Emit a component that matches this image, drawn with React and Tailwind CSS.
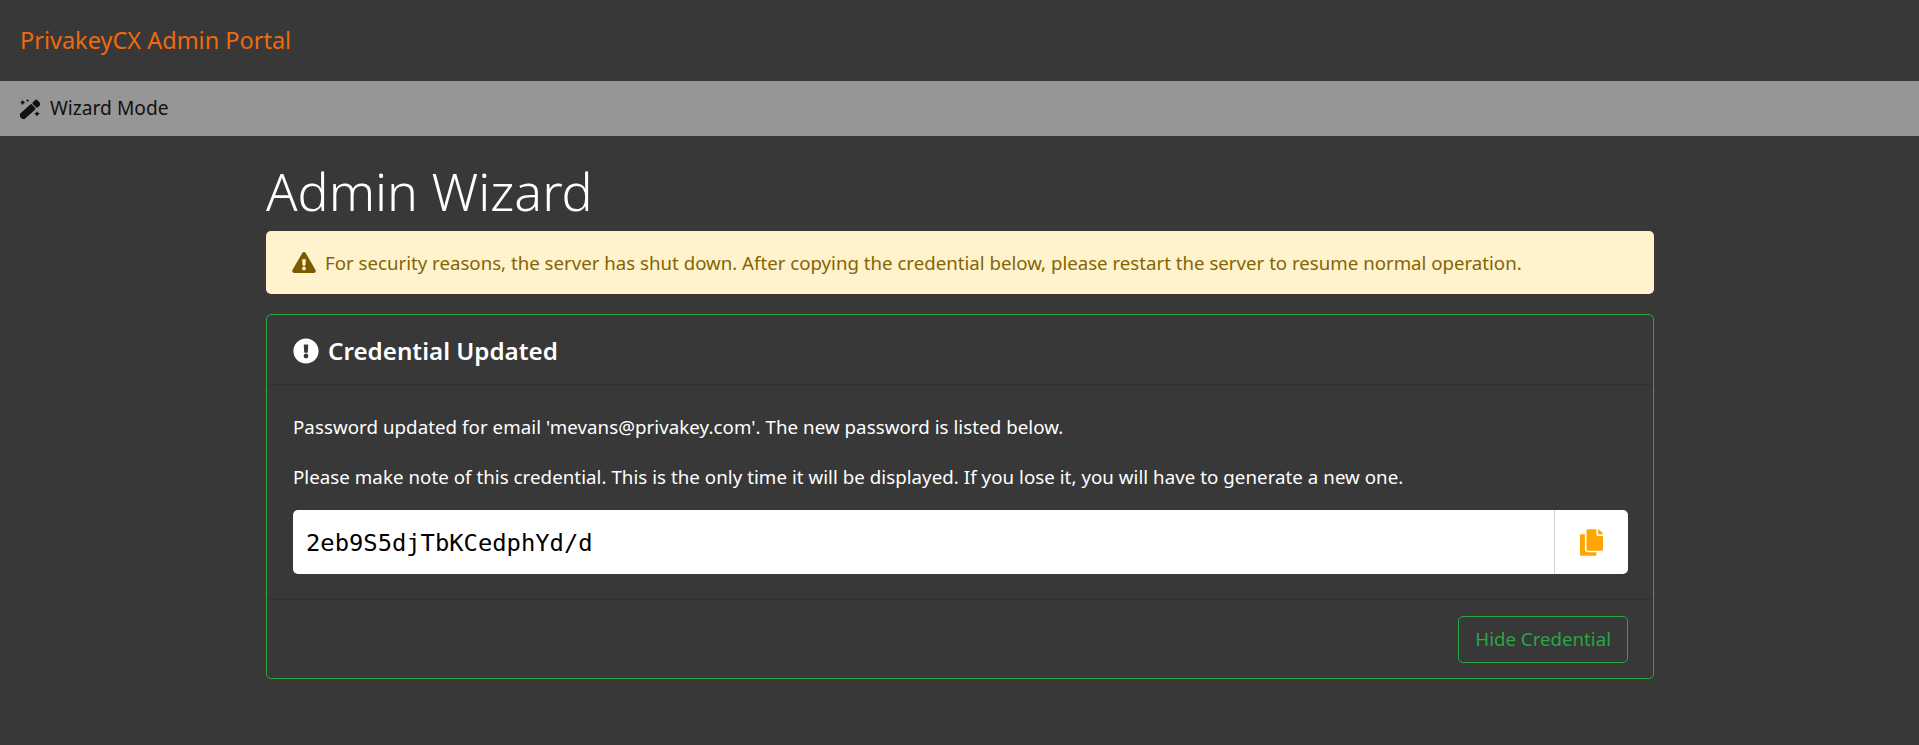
import React from 'react';
import { FaCopy, FaExclamationCircle, FaExclamationTriangle } from 'react-icons/fa';

const Sparkle = ({ x, y, r }) => (
  <path
    d={`M${x} ${y - r}Q${x + r * 0.25} ${y - r * 0.25} ${x + r} ${y}Q${x + r * 0.25} ${y + r * 0.25} ${x} ${y + r}Q${x - r * 0.25} ${y + r * 0.25} ${x - r} ${y}Q${x - r * 0.25} ${y - r * 0.25} ${x} ${y - r}Z`}
  />
);

// wand with a light band near the tip and three sparkles
const WandIcon = () => (
  <svg viewBox="0 0 20 20" className="w-5 h-5 text-[#111111]" fill="currentColor">
    <g transform="rotate(-42 10 10.5)">
      <rect x="-2.2" y="7" width="17" height="7" rx="1.2" />
      <rect x="15.8" y="7" width="6" height="7" rx="1.2" />
    </g>
    <Sparkle x={2.6} y={3.6} r={2.5} />
    <Sparkle x={7.6} y={1.6} r={1.6} />
    <Sparkle x={17} y={14.8} r={2.8} />
  </svg>
);

const App = () => {
  return (
    <div className="min-h-[745px] bg-[#383838] font-['Noto_Sans',sans-serif] text-white text-[18.7px]">
      {/* Top nav */}
      <nav className="h-[81px] flex items-center px-5">
        <span className="text-[23.5px] text-[#f0690f]">PrivakeyCX Admin Portal</span>
      </nav>

      {/* Mode bar */}
      <div className="h-[55px] flex items-center px-5 bg-[#969696] text-[#111111]">
        <WandIcon />
        <span className="ml-2.5 text-[19.2px]">Wizard Mode</span>
      </div>

      <main className="w-[1388px] ml-[266px]">
        <h1 className="mt-[26px] text-[51.9px] leading-[58px] font-light mb-[11px]">Admin Wizard</h1>

        {/* Alert */}
        <div className="h-[63px] flex items-center pl-[26px] pr-[27px] rounded-[5px] bg-[#fff3cd] text-[#856404]">
          <FaExclamationTriangle className="w-[24px] h-[21px] text-[#7a5c00]" />
          <span className="ml-[9px] text-[18.67px]">
            For security reasons, the server has shut down. After copying the credential below, please restart the server to resume normal operation.
          </span>
        </div>

        {/* Card */}
        <div className="mt-[20px] border border-[#28a745] rounded-[5px]">
          <div className="h-[70px] flex items-center pt-[3px] px-[26px] border-b border-[#303030]">
            <FaExclamationCircle className="w-[26px] h-[26px]" />
            <h2 className="ml-[9px] text-[24.2px] font-semibold">Credential Updated</h2>
          </div>
          <div className="pl-[26px] pr-[25px] pt-[28px] pb-[25px] border-b border-[#303030]">
            <p className="leading-[28px] tracking-[0.06px]">Password updated for email 'mevans@privakey.com'. The new password is listed below.</p>
            <p className="mt-[22px] leading-[28px] tracking-[0.05px]">Please make note of this credential. This is the only time it will be displayed. If you lose it, you will have to generate a new one.</p>
            <div className="mt-[19px] h-[64px] flex items-stretch bg-white rounded-[5px]">
              <div className="flex-1 flex items-center pt-[3px] px-[13px] text-black text-[23.8px] font-['DejaVu_Sans_Mono',monospace]">2eb9S5djTbKCedphYd/d</div>
              <button className="w-[74px] flex items-center justify-center border-l border-[#d4d4d4]">
                <FaCopy className="w-[23px] h-[27px] text-[#ffa500]" />
              </button>
            </div>
          </div>
          <div className="flex justify-end pl-[26px] pr-[25px] pt-[16px] pb-[15px]">
            <button className="h-[47px] px-[16px] border border-[#28a745] rounded-[5px] text-[#28a745]">Hide Credential</button>
          </div>
        </div>
      </main>
    </div>
  );
};

export default App;
